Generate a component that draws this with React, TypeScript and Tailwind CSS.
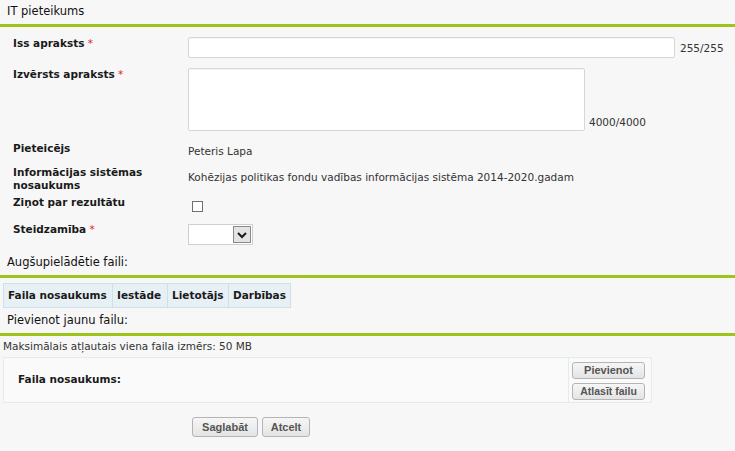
import React from "react";

const F = { fontFamily: '"DejaVu Sans", Verdana, sans-serif' };

function Req() {
  return <span className="text-[#e8202a] font-normal"> *</span>;
}

function Btn({ children, className = "" }: { children: React.ReactNode; className?: string }) {
  return (
    <div
      className={
        "flex items-center justify-center rounded-[3px] border border-[#b4b4b4] bg-gradient-to-b from-[#f6f6f6] to-[#e4e4e4] font-bold text-[#555] font-['Liberation_Sans',Arial,sans-serif] " +
        className
      }
    >
      {children}
    </div>
  );
}

export default function App() {
  return (
    <div className="min-h-[451px] w-[735px] bg-[#f7f7f7] text-[#1a1a1a]" style={F}>
      {/* header */}
      <div className="flex h-[27px] items-center border-b-[3px] border-[#9ec41b] pl-[7px] text-[11.5px] text-[#111]">
        IT pieteikums
      </div>

      {/* form rows */}
      <div className="flex h-[38px] items-start">
        <div className="mt-[9px] w-[188px] pl-[13px] text-[10.5px] font-bold leading-[14px]">
          Iss apraksts<Req />
        </div>
        <div className="mt-[10px] flex items-center">
          <div className="h-[21px] w-[487px] rounded-[2px] border border-[#d6d6d6] bg-white shadow-[inset_0_1px_1px_rgba(0,0,0,0.04)]" />
          <span className="ml-[5px] text-[10.5px] leading-[14px] text-[#333]">255/255</span>
        </div>
      </div>

      <div className="flex h-[76px] items-start">
        <div className="mt-[2px] w-[188px] pl-[13px] text-[10.5px] font-bold leading-[14px]">
          Izvērsts apraksts<Req />
        </div>
        <div className="mt-[3px] flex items-end">
          <div className="h-[63px] w-[397px] rounded-[2px] border border-[#d6d6d6] bg-white shadow-[inset_0_1px_1px_rgba(0,0,0,0.04)]" />
          <span className="mb-[2px] ml-[4px] text-[10.5px] leading-[14px] text-[#333]">4000/4000</span>
        </div>
      </div>

      <div className="flex h-[24px] items-start">
        <div className="w-[188px] pl-[13px] text-[10.5px] font-bold leading-[14px]">Pieteicējs</div>
        <div className="mt-[3px] text-[10.5px] leading-[14px] text-[#333]">Peteris Lapa</div>
      </div>

      <div className="flex h-[29px] items-start">
        <div className="mt-[1px] w-[188px] pl-[13px] text-[10.5px] font-bold leading-[13px]">
          Informācijas sistēmas
          <br />
          nosaukums
        </div>
        <div className="mt-[5px] text-[10.5px] leading-[14px] text-[#333]">
          Kohēzijas politikas fondu vadības informācijas sistēma 2014-2020.gadam
        </div>
      </div>

      <div className="flex h-[28px] items-start">
        <div className="mt-[1px] w-[188px] pl-[13px] text-[10.5px] font-bold leading-[14px]">Ziņot par rezultātu</div>
        <div className="ml-[4px] mt-[7px] h-[11px] w-[11px] border border-[#707070] bg-white" />
      </div>

      <div className="flex h-[29px] items-start">
        <div className="w-[188px] pl-[13px] text-[10.5px] font-bold leading-[14px]">
          Steidzamība<Req />
        </div>
        <div className="mt-[2px] flex h-[21px] w-[65px] items-stretch justify-end border border-[#cfcfcf] bg-white">
          <div className="m-[1px] flex w-[18px] items-center justify-center border border-[#8a8a8a] bg-[#e3e3e3]">
            <svg width="12" height="8" viewBox="0 0 12 8">
              <path d="M2 2 L6 6 L10 2" fill="none" stroke="#1a1a1a" strokeWidth="2" />
            </svg>
          </div>
        </div>
      </div>

      {/* uploaded files */}
      <div className="flex h-[27px] items-center border-b-[3px] border-[#9ec41b] pl-[7px] text-[11.5px] text-[#111]">
        Augšupielādētie faili:
      </div>

      <div className="ml-[3px] mt-[5px] flex h-[25px] w-[288px] border border-[#cde2e8] bg-[#e7f0f4] text-[10.5px] font-bold">
        <div className="flex w-[109px] items-center border-r border-[#cde2e8] pl-[4px]">Faila nosaukums</div>
        <div className="flex w-[55px] items-center border-r border-[#cde2e8] pl-[4px]">Iestāde</div>
        <div className="flex w-[61px] items-center border-r border-[#cde2e8] pl-[4px]">Lietotājs</div>
        <div className="flex flex-1 items-center pl-[4px]">Darbības</div>
      </div>

      <div className="flex h-[28px] items-center border-b-[3px] border-[#9ec41b] pl-[7px] text-[11.5px] text-[#111]">
        Pievienot jaunu failu:
      </div>

      <div className="mt-[3px] pl-[3px] text-[10.5px] leading-[14px] text-[#333]">
        Maksimālais atļautais viena faila izmērs: 50 MB
      </div>

      <div className="ml-[3px] mt-[4px] flex h-[46px] w-[649px] border border-[#e2ebef] bg-[#fafafa]">
        <div className="flex flex-1 items-center pl-[14px] text-[10.5px] font-bold">Faila nosaukums:</div>
        <div className="flex w-[83px] flex-col gap-[4px] border-l border-[#e2ebef] pl-[3px] pt-[4px]">
          <Btn className="h-[17px] w-[73px] text-[11px]">Pievienot</Btn>
          <Btn className="h-[17px] w-[73px] text-[10.5px]">Atlasīt failu</Btn>
        </div>
      </div>

      <div className="ml-[192px] mt-[14px] flex gap-[4px]">
        <Btn className="h-[20px] w-[66px] text-[11px]">Saglabāt</Btn>
        <Btn className="h-[20px] w-[48px] text-[11px]">Atcelt</Btn>
      </div>
    </div>
  );
}
